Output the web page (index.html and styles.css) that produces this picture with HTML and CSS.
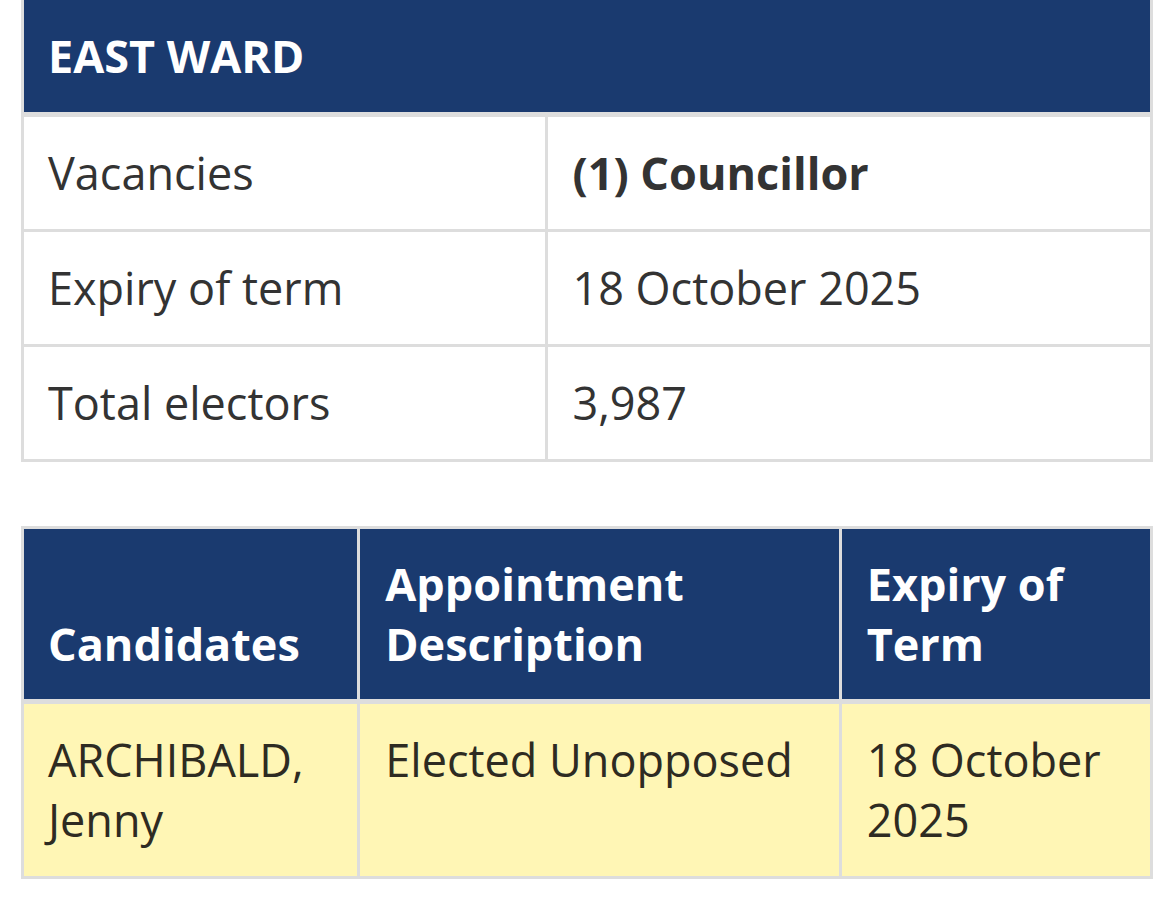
FILE: index.html
```html
<!DOCTYPE html>
<html lang="en">
<head>
<meta charset="utf-8">
<title>East Ward</title>
<link rel="stylesheet" href="styles.css">
</head>
<body>
<main class="page">
  <table class="ward-table">
    <colgroup>
      <col class="ward-col-label">
      <col class="ward-col-value">
    </colgroup>
    <thead>
      <tr>
        <th class="ward-title" colspan="2">EAST WARD</th>
      </tr>
    </thead>
    <tbody>
      <tr>
        <td>Vacancies</td>
        <td><strong>(1) Councillor</strong></td>
      </tr>
      <tr>
        <td>Expiry of term</td>
        <td>18 October 2025</td>
      </tr>
      <tr>
        <td>Total electors</td>
        <td>3,987</td>
      </tr>
    </tbody>
  </table>

  <table class="cand-table">
    <colgroup>
      <col class="cand-col-name">
      <col class="cand-col-desc">
      <col class="cand-col-term">
    </colgroup>
    <thead>
      <tr>
        <th>Candidates</th>
        <th>Appointment Description</th>
        <th>Expiry of Term</th>
      </tr>
    </thead>
    <tbody>
      <tr class="elected">
        <td>ARCHIBALD, Jenny</td>
        <td>Elected Unopposed</td>
        <td>18 October 2025</td>
      </tr>
    </tbody>
  </table>
</main>
</body>
</html>
```

FILE: styles.css
```css
html, body {
  margin: 0;
  padding: 0;
  background: #ffffff;
}

body {
  font-family: "Open Sans", "Noto Sans", "Liberation Sans", sans-serif;
  color: #333333;
  font-size: 45px;
  line-height: 60px;
}

.page {
  padding: 0 11px 0 21px;
  margin-top: -3px;
}

table {
  border-collapse: collapse;
  table-layout: fixed;
  width: 1132px;
  border: 3px solid #dddddd;
}

th, td {
  border: 3px solid #dddddd;
  padding: 26px 24px;
  text-align: left;
}

th {
  background: #1a3a6f;
  color: #ffffff;
  font-weight: 700;
}

.ward-table .ward-title {
  padding-top: 26px;
  padding-bottom: 26px;
  border-bottom-width: 5px;
}

.ward-table td strong {
  font-weight: 700;
}

.ward-col-label { width: 524px; }
.ward-col-value { width: 604px; }

.cand-table {
  margin-top: 64px;
}

.cand-table th {
  vertical-align: bottom;
  padding: 25px 24px 25px 25px;
  border-bottom-width: 5px;
}

.cand-table th:first-child,
.cand-table td:first-child {
  padding-left: 24px;
}

.cand-table td {
  vertical-align: top;
  padding: 26px 24px 26px 25px;
  background: #fff6b5;
  color: #2e2b22;
}

.cand-col-name { width: 336px; }
.cand-col-desc { width: 481px; }
.cand-col-term { width: 311px; }
```
